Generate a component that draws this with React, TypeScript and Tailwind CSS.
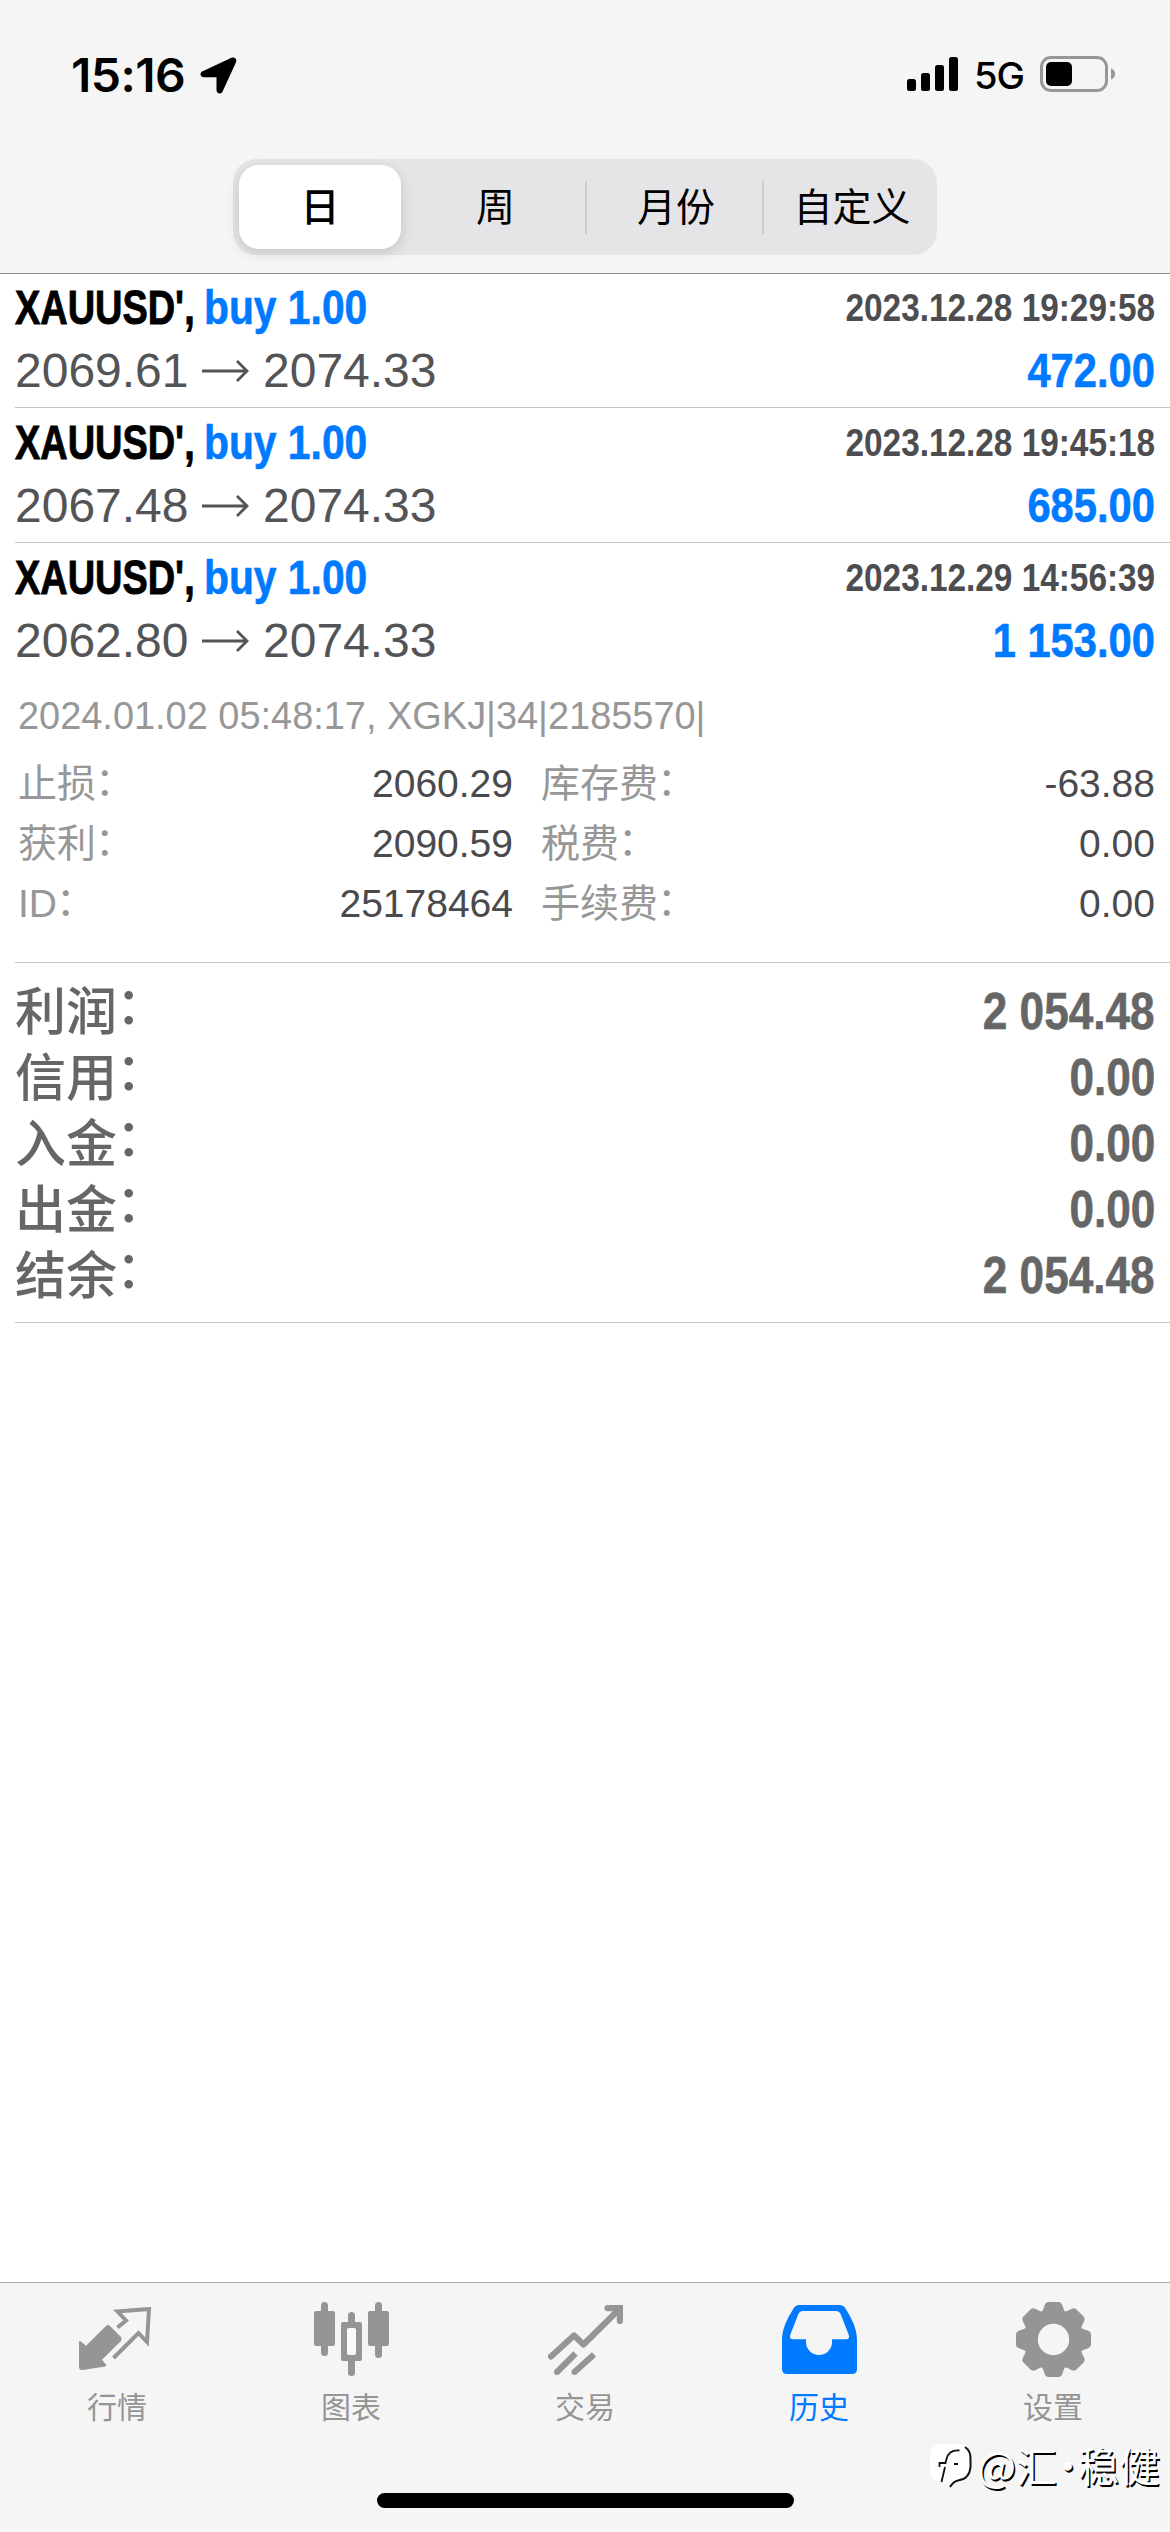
import type { ReactNode } from 'react';

const cjk = "font-['Liberation_Sans','Noto_Sans_CJK_SC',sans-serif]";

type Trade = { volume: string; open: string; close: string; time: string; profit: string };

const trades: Trade[] = [
  { volume: 'buy 1.00', open: '2069.61', close: '2074.33', time: '2023.12.28 19:29:58', profit: '472.00' },
  { volume: 'buy 1.00', open: '2067.48', close: '2074.33', time: '2023.12.28 19:45:18', profit: '685.00' },
  { volume: 'buy 1.00', open: '2062.80', close: '2074.33', time: '2023.12.29 14:56:39', profit: '1 153.00' },
];

const details = [
  ['止损', '2060.29', '库存费', '-63.88'],
  ['获利', '2090.59', '税费', '0.00'],
  ['ID', '25178464', '手续费', '0.00'],
];

const totals = [
  ['利润', '2 054.48'],
  ['信用', '0.00'],
  ['入金', '0.00'],
  ['出金', '0.00'],
  ['结余', '2 054.48'],
];

function StatusBar() {
  return (
    <div className="flex h-[150px] items-start justify-between pl-[71px] pr-[54px] pt-[54px]">
      <div className="flex h-[42px] items-center">
        <span className="w-[116px] origin-left scale-x-[1.045] whitespace-nowrap font-['Inter'] text-[46px] font-semibold leading-[42px] tracking-[-0.5px] text-black">
          15:16
        </span>
        <svg className="ml-[13px]" width="37" height="37" viewBox="0 0 37 37">
          <path d="M31.500 .8 C34.500 -.4 37.300 2 36 5.200 L22.600 34.400 C21 37.700 16.500 36.800 16.500 33 V20.300 H4 C0 20.300 -.8 16 2.600 14.300 Z" fill="#000" />
        </svg>
      </div>
      <div className="flex h-[40px] items-center">
        <svg width="52" height="34" viewBox="0 0 52 34">
          <rect x="0" y="22" width="9" height="12" rx="2.500" />
          <rect x="14" y="16" width="9" height="18" rx="2.500" />
          <rect x="28" y="8" width="9" height="26" rx="2.500" />
          <rect x="42" y="0" width="9" height="34" rx="2.500" />
        </svg>
        <span className="ml-[15px] w-[50px] origin-left scale-x-[1.03] whitespace-nowrap pt-[4px] font-['Inter'] text-[37px] font-medium leading-[40px] tracking-[-1px] text-black">
          5G
        </span>
        <svg className="ml-[16px]" width="76" height="36" viewBox="0 0 76 36">
          <rect x="1.500" y="1.500" width="65" height="33" rx="9.500" fill="none" stroke="#979797" strokeWidth="3" />
          <rect x="6" y="6" width="26" height="24" rx="5" fill="#000" />
          <path d="M71 12.500 C76.500 14 76.500 22 71 23.500 Z" fill="#979797" />
        </svg>
      </div>
    </div>
  );
}

function Segments() {
  return (
    <div className={`mx-auto mt-[9px] flex h-[96px] w-[704px] items-center rounded-[24px] bg-[#e5e5e7] text-[39px] leading-none text-black ${cjk}`}>
      <div className="ml-[6px] flex h-[84px] w-[162px] items-center justify-center rounded-[20px] bg-white font-medium shadow-[0_4px_14px_rgba(0,0,0,0.14)]">日</div>
      <div className="flex w-[184px] items-center justify-center pl-[5px]">周</div>
      <div className="h-[53px] w-[2px] bg-[#cdcdd0]" />
      <div className="flex w-[175px] items-center justify-center pl-[3px]">月份</div>
      <div className="h-[53px] w-[2px] bg-[#cdcdd0]" />
      <div className="flex w-[173px] items-center justify-center pl-[3px]">自定义</div>
    </div>
  );
}

function TradeRow({ trade, first, last }: { trade: Trade; first?: boolean; last?: boolean }) {
  return (
    <div className={`ml-[15px] pr-[15px] font-['Liberation_Sans',sans-serif] ${first ? 'pt-[2px]' : 'pt-[3px]'} ${last ? '' : 'border-b border-[#c4c4c4] pb-[5px]'}`}>
      <div className="flex h-[63px] justify-between whitespace-nowrap leading-[63px]">
        <div className="flex text-[48px] font-bold">
          <span className="w-[189px] origin-left scale-x-[0.79] text-black [-webkit-text-stroke:0.900px_#000]">XAUUSD',</span>
          <span className="origin-left scale-x-[0.85] text-[#007aff] [-webkit-text-stroke:0.600px_#007aff]">{trade.volume}</span>
        </div>
        <span className="origin-right scale-x-[0.855] text-[39px] font-bold text-[#4d4d50]">{trade.time}</span>
      </div>
      <div className="flex h-[63px] justify-between whitespace-nowrap text-[48px] leading-[63px]">
        <div className="flex items-center text-[#545456]">
          <span className="w-[187px]">{trade.open}</span>
          <svg className="mr-[14px] mt-[1px]" width="47" height="22" viewBox="0 0 47 22" fill="none" stroke="#545456" strokeWidth="2.800">
            <path d="M0 11 H45 M35 1 L45 11 L35 21" />
          </svg>
          <span>{trade.close}</span>
        </div>
        <span className="origin-right scale-x-[0.868] font-bold text-[#007aff] [-webkit-text-stroke:0.600px_#007aff]">{trade.profit}</span>
      </div>
    </div>
  );
}

function Colon() {
  return <span className="relative -left-px -top-[6px] font-['Noto_Sans_CJK_SC',sans-serif]">：</span>;
}

function Details() {
  return (
    <div className={`pl-[18px] pr-[15px] ${cjk}`}>
      <div className="mt-[14px] h-[60px] origin-left scale-x-[0.998] whitespace-nowrap text-[38px] leading-[60px] text-[#979797]">
        2024.01.02 05:48:17, XGKJ|34|2185570|
      </div>
      <div className="mt-[8px]">
        {details.map(([a, av, b, bv]) => (
          <div key={a} className="flex h-[60px] whitespace-nowrap text-[39px] leading-[60px] text-[#4a4a4c]">
            <span className="flex flex-1 text-[#979797]">{a}<Colon /></span>
            <span>{av}</span>
            <span className="ml-[28px] flex w-[240px] text-[#979797]">{b}<Colon /></span>
            <span className="w-[374px] text-right">{bv}</span>
          </div>
        ))}
      </div>
    </div>
  );
}

function Totals() {
  return (
    <div className={`ml-[15px] mt-[28px] border-y border-[#c4c4c4] pb-[13px] pr-[15px] pt-[16px] text-[51px] text-[#666] ${cjk}`}>
      {totals.map(([label, value]) => (
        <div key={label} className="flex h-[66px] justify-between whitespace-nowrap">
          <span className="-mt-[4px] flex h-[66px] font-['Noto_Sans_CJK_SC',sans-serif] font-medium leading-[66px]">{label}<Colon /></span>
          <span className="origin-right scale-x-[0.865] font-bold leading-[66px] [-webkit-text-stroke:0.600px_#666]">{value}</span>
        </div>
      ))}
    </div>
  );
}

function Tab({ label, active, children }: { label: string; active?: boolean; children: ReactNode }) {
  return (
    <div className={`flex w-[234px] flex-col items-center ${active ? 'text-[#007aff]' : 'text-[#959595]'}`}>
      <div className="flex h-[75px] items-center justify-center">{children}</div>
      <span className="mt-[8px] font-['Noto_Sans_CJK_SC',sans-serif] text-[30px] leading-[40px]">{label}</span>
    </div>
  );
}

const teeth = [0, 45, 90, 135, 180, 225, 270, 315];

function TabBar() {
  return (
    <div className="relative mt-auto h-[250px] border-t border-[#ababab] bg-[#f5f5f5]">
      <div className="flex pt-[19px]">
        <Tab label="行情">
          <svg className="mr-[1px]" width="75" height="66" viewBox="0 0 75 66">
            <path d="M0 34.500 Q1 33.500 2.500 35 L7 38.800 L27 19 Q29 17 31 19 L42 30 Q43.500 32 42 34 L23 52.800 L27 57.500 Q28 59 26 59.500 L4 63 Q0 63.500 0 60 Z" fill="currentColor" />
            <path d="M38.500 20.500 L47 13.500 L38.500 4.500 L70 2 L68 35 L59.500 26 L34.500 51" fill="none" stroke="currentColor" strokeWidth="4" />
          </svg>
        </Tab>
        <Tab label="图表">
          <svg width="75" height="75" viewBox="0 0 75 75" fill="currentColor">
            <rect x="0" y="9" width="21" height="35" rx="2" />
            <rect x="7" y="0" width="7" height="54" rx="3.500" />
            <rect x="34" y="10" width="7" height="64" rx="3.500" />
            <rect x="27" y="20" width="21" height="39" rx="2" />
            <rect x="33" y="26" width="9" height="27" rx="2" fill="#fafafa" />
            <rect x="54" y="9" width="21" height="35" rx="2" />
            <rect x="61" y="0" width="7" height="56" rx="3.500" />
          </svg>
        </Tab>
        <Tab label="交易">
          <svg width="75" height="70" viewBox="0 0 75 70" fill="none" stroke="currentColor" strokeWidth="6.200">
            <path d="M3 51.500 L26 30.500 L35.500 39.500 L71 4.500" strokeLinecap="round" strokeLinejoin="round" />
            <path d="M59.500 3.100 H71.900 V16" strokeLinecap="round" />
            <path d="M9 67 L27.500 48.500" />
            <path d="M26.500 67 L46 49.500" />
            <circle cx="9" cy="67" r="3" fill="currentColor" stroke="none" />
            <circle cx="26.500" cy="67" r="3" fill="currentColor" stroke="none" />
          </svg>
        </Tab>
        <Tab label="历史" active>
          <svg width="75" height="69" viewBox="0 0 75 69">
            <path
              fillRule="evenodd"
              fill="currentColor"
              d="M17 0 H58 Q61.500 0 63.500 3.500 C70 14 75 24 75 35 V64 Q75 69 70 69 H5 Q0 69 0 64 V35 C0 24 5 14 11.500 3.500 Q13.500 0 17 0 Z M21 6 Q17.500 6 16.200 9.500 L8.200 30 Q7 34.200 11 34.200 H24 V37 A13 13 0 0 0 50 37 V34.200 H64 Q68 34.200 66.800 30 L58.800 9.500 Q57.500 6 54 6 Z"
            />
          </svg>
        </Tab>
        <Tab label="设置">
          <svg width="75" height="75" viewBox="-37.500 -37.500 75 75" fill="currentColor">
            <path fillRule="evenodd" d="M0 -29.500 A29.500 29.500 0 1 1 0 29.500 A29.500 29.500 0 1 1 0 -29.500 Z M0 -15.700 A15.700 15.700 0 1 0 0 15.700 A15.700 15.700 0 1 0 0 -15.700 Z" />
            {teeth.map((a) => (
              <path key={a} transform={`rotate(${a})`} d="M-13 -26 C-10.500 -28.500 -10 -31 -9 -34 Q-7.800 -37.500 -5 -37.500 H5 Q7.800 -37.500 9 -34 C10 -31 10.500 -28.500 13 -26 Z" />
            ))}
          </svg>
        </Tab>
      </div>
      <div className="mx-auto mt-[68px] h-[15px] w-[417px] rounded-full bg-black" />
      <div className="absolute right-[10px] top-[155px] flex h-[52px] items-center">
        <svg className="mr-[4px]" width="44" height="48" viewBox="0 0 44 48">
          <path d="M12 4 H30 Q42 5 42 17 V27 Q41 38 31 39.500 L27 41 L21 47 L21 42 H12 Q1 41 1 30 V16 Q1 5 12 4 Z" fill="#fff" />
          <path d="M36 7 Q42 11 41.500 20 V27 Q40.500 39 29 40.500 Q25 41 21 47" fill="none" stroke="#111" strokeWidth="2" />
          <path d="M30.500 10.500 Q20 9.500 17.500 19 L16.500 23 H10.500 V27 M16 27 L12.500 42 M25 24 H29" fill="none" stroke="#111" strokeWidth="1.800" />
        </svg>
        <span className="flex whitespace-nowrap font-['Noto_Sans_CJK_SC',sans-serif] text-[41px] leading-[52px] text-white [text-shadow:1.500px_1.500px_0.500px_#000]">
          <span>@汇</span>
          <span className="flex w-[21px] justify-center">·</span>
          <span>稳健</span>
        </span>
      </div>
    </div>
  );
}

export default function App() {
  return (
    <div className="flex h-[2532px] w-[1170px] flex-col overflow-hidden bg-white">
      <header className="h-[274px] border-b border-[#8e8e8e] bg-[#f5f5f5]">
        <StatusBar />
        <Segments />
      </header>
      {trades.map((t, i) => (
        <TradeRow key={t.time} trade={t} first={i === 0} last={i === trades.length - 1} />
      ))}
      <Details />
      <Totals />
      <TabBar />
    </div>
  );
}
